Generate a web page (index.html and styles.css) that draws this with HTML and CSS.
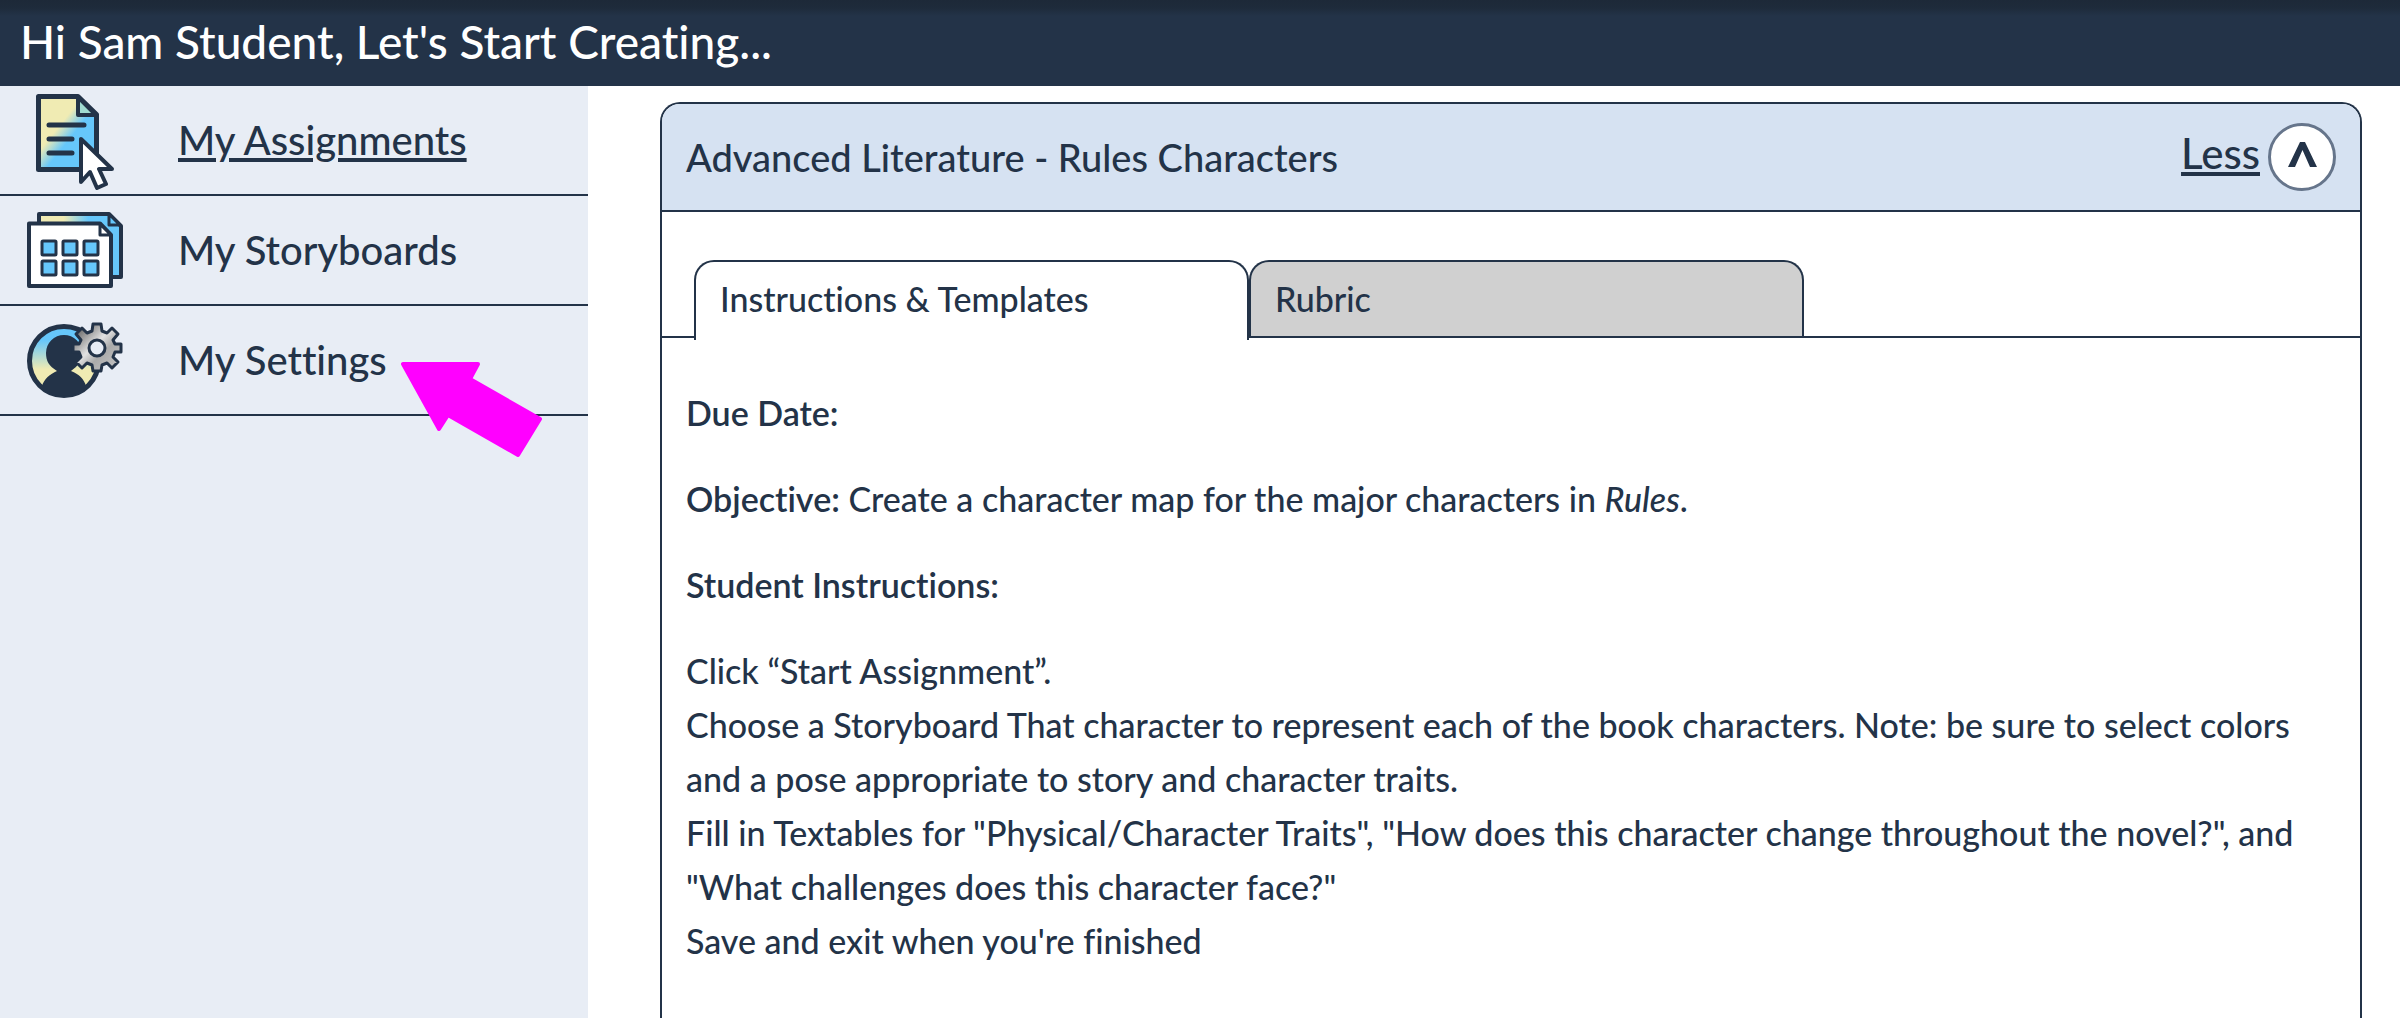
FILE: index.html
```html
<!DOCTYPE html>
<html lang="en">
<head>
<meta charset="utf-8">
<meta name="viewport" content="width=device-width, initial-scale=1">
<title>My Assignments</title>
<link rel="stylesheet" href="styles.css">
</head>
<body>
<header class="banner"><h1 class="greeting">Hi Sam Student, Let's Start Creating...</h1></header>
<div class="layout">
  <nav class="sidebar" aria-label="Dashboard">
    <a class="nav-item current" href="#assignments" aria-current="page">
      <svg class="nav-icon" viewBox="-1 0 100 100" aria-hidden="true">
        <defs><linearGradient id="page-fill" x1="0" y1="0" x2="1" y2="1"><stop offset=".38" stop-color="#f0ebb3"/><stop offset=".56" stop-color="#66c7fb"/></linearGradient></defs>
        <path d="M13.500 6.500H53L71.500 24.500V79.500H13.500Z" fill="url(#page-fill)" stroke="#233348" stroke-width="5" stroke-linejoin="round"/>
        <path d="M53 7V25H71Z" fill="#a0dbd1" stroke="#233348" stroke-width="4" stroke-linejoin="round"/>
        <path d="M24 35H59M24 49H47M24 63H47" stroke="#233348" stroke-width="5" stroke-linecap="round"/>
        <path d="M56 49V92L65 82L72 98L81 94L74 79H87Z" fill="#fff" stroke="#233348" stroke-width="4" stroke-linejoin="round"/>
      </svg>
      <span>My Assignments</span>
    </a>
    <a class="nav-item" href="#storyboards">
      <svg class="nav-icon" viewBox="0 0 100 100" aria-hidden="true">
        <defs><linearGradient id="board-fill"><stop offset=".3" stop-color="#f0ebb3"/><stop offset=".6" stop-color="#66c7fb"/></linearGradient></defs>
        <path d="M15 14H85L97 26V77H15Z" fill="url(#board-fill)" stroke="#233348" stroke-width="4" stroke-linejoin="round"/>
        <path d="M85 14V25H96Z" fill="#66c7fb" stroke="#233348" stroke-width="3" stroke-linejoin="round"/>
        <path d="M5 23.500H76L87 35V86H5Z" fill="#fff" stroke="#233348" stroke-width="4" stroke-linejoin="round"/>
        <path d="M76 24V35H87Z" fill="#fff" stroke="#233348" stroke-width="3" stroke-linejoin="round"/>
        <g fill="#66c7fb" stroke="#233348" stroke-width="3"><rect x="18" y="41" width="14" height="14" rx="1"/><rect x="39" y="41" width="14" height="14" rx="1"/><rect x="60" y="41" width="14" height="14" rx="1"/><rect x="18" y="61" width="14" height="14" rx="1"/><rect x="39" y="61" width="14" height="14" rx="1"/><rect x="60" y="61" width="14" height="14" rx="1"/></g>
      </svg>
      <span>My Storyboards</span>
    </a>
    <a class="nav-item" href="#settings">
      <svg class="nav-icon" viewBox="0 0 100 100" aria-hidden="true">
        <defs>
          <linearGradient id="avatar-fill" x1="0" y1="0" x2="0" y2="1"><stop offset=".2" stop-color="#66c7fb"/><stop offset=".62" stop-color="#f0ebb3"/></linearGradient>
          <linearGradient id="gear-fill" x1="0" y1="0" x2="1" y2="1"><stop offset=".15" stop-color="#777"/><stop offset=".45" stop-color="#e2e2e2"/><stop offset=".62" stop-color="#aaa"/><stop offset="1" stop-color="#c9c9c9"/></linearGradient>
        </defs>
        <circle cx="40" cy="51" r="34.500" fill="url(#avatar-fill)" stroke="#233348" stroke-width="5"/>
        <path d="M33 61C25 56 22 51 22 43A18 18 0 0 1 58 43C58 51 54 56 47 61C55 64 60 69 62 76Q52 86 40 86Q27 86 18 76C20 69 26 64 33 61Z" fill="#233348"/>
        <path d="M69 14H77L78 21L83 23L88 18L94 24L89 30L91 34H97V42H91L89 47L94 52L88 58L83 53L78 55L77 61H69L68 55L63 53L58 58L52 52L57 47L55 42H49V34H55L57 30L52 24L58 18L63 23L68 21Z" fill="url(#gear-fill)" stroke="#233348" stroke-width="3" stroke-linejoin="round"/>
        <circle cx="73" cy="38" r="8" fill="#e8edf5" stroke="#233348" stroke-width="3"/>
      </svg>
      <span>My Settings</span>
    </a>
    <svg class="pointer" viewBox="0 0 144 98" aria-hidden="true"><path d="M3 3H78L70 18L140 58L118 94L48 54L39 68Z" fill="#f0f" stroke="#f0f" stroke-width="4" stroke-linejoin="round"/></svg>
  </nav>
  <main class="content">
    <article class="card">
      <header class="card-head">
        <h2 class="card-title">Advanced Literature - Rules Characters</h2>
        <button class="toggle" type="button" aria-expanded="true">
          <span class="toggle-label">Less</span>
          <svg class="toggle-icon" viewBox="0 0 68 68" aria-hidden="true"><circle cx="34" cy="34" r="32.500" fill="#fff" stroke="#66758b" stroke-width="3"/><path d="M20 44L32 19H37L49 44H42L34.500 27L27 44Z" fill="#233348"/></svg>
        </button>
      </header>
      <div class="tabs" role="tablist">
        <button class="tab active" type="button" role="tab" aria-selected="true">Instructions &amp; Templates</button>
        <button class="tab" type="button" role="tab" aria-selected="false">Rubric</button>
      </div>
      <div class="details" role="tabpanel">
        <p><strong>Due Date:</strong></p>
        <p><strong>Objective:</strong> Create a character map for the major characters in <em>Rules</em>.</p>
        <p><strong>Student Instructions:</strong></p>
        <ol class="steps">
          <li>Click “Start Assignment”.</li>
          <li>Choose a Storyboard That character to represent each of the book characters. Note: be sure to select colors and a pose appropriate to story and character traits.</li>
          <li>Fill in Textables for "Physical/Character Traits", "How does this character change throughout the novel?", and "What challenges does this character face?"</li>
          <li>Save and exit when you're finished</li>
        </ol>
      </div>
    </article>
  </main>
</div>
</body>
</html>
```
FILE: styles.css
```css
* { box-sizing: border-box; }

body {
  margin: 0;
  min-height: 100vh;
  display: flex;
  flex-direction: column;
  background: #fff;
  color: #233348;
  font: 500 34px/54px Lato, "Open Sans", sans-serif;
  font-variant-ligatures: none;
}

h1, h2, p, ol { margin: 0; padding: 0; }
button { font: inherit; font-variant-ligatures: none; color: inherit; margin: 0; cursor: pointer; }

.banner {
  padding: 12px 20px 14px;
  background: linear-gradient(#1d2938, #1e2b3b 8px, #233348 16px);
  color: #fff;
}
.greeting { font-size: 46px; line-height: 60px; font-weight: 500; }

.layout { flex: 1; display: flex; }

.sidebar { position: relative; flex: 0 0 588px; background: #e8edf5; }
.nav-item {
  display: flex;
  align-items: center;
  gap: 54px;
  height: 110px;
  padding-left: 24px;
  border-bottom: 2px solid #233348;
  color: inherit;
  font-size: 40px;
  text-decoration: none;
}
.current { text-decoration: underline; text-decoration-thickness: 4px; text-underline-offset: 3px; }
.nav-icon { width: 100px; height: 100px; flex: none; }
.pointer { position: absolute; left: 400px; top: 275px; width: 144px; height: 98px; }

.content { flex: 1; min-width: 0; display: flex; padding: 16px 38px 0 72px; }
.card {
  flex: 1;
  border: 2px solid #233348;
  border-bottom: 0;
  border-radius: 20px 20px 0 0;
  overflow: hidden;
}
.card-head {
  display: flex;
  align-items: center;
  justify-content: space-between;
  height: 108px;
  padding: 0 24px;
  background: #d6e2f2;
  border-bottom: 2px solid #233348;
}
.card-title { font-size: 38px; font-weight: 500; }
.toggle { display: flex; align-items: center; gap: 8px; padding: 0; border: 0; background: none; }
.toggle-label {
  padding-bottom: 8px;
  font-size: 42px;
  text-decoration: underline;
  text-decoration-thickness: 4px;
  text-underline-offset: 3px;
}
.toggle-icon { width: 68px; height: 68px; }

.tabs { display: flex; padding: 48px 32px 0; border-bottom: 2px solid #233348; }
.tab {
  flex: 0 0 555px;
  height: 76px;
  padding: 0 24px;
  border: 2px solid #233348;
  border-bottom: 0;
  border-radius: 20px 20px 0 0;
  background: #d0d0d0;
  text-align: left;
}
.tab.active { height: 80px; margin-bottom: -4px; padding-bottom: 4px; background: #fff; }

.details { padding: 48px 24px; }
.details p { margin-bottom: 32px; }
.details strong { font-weight: 600; }
.steps { list-style: none; }
```
